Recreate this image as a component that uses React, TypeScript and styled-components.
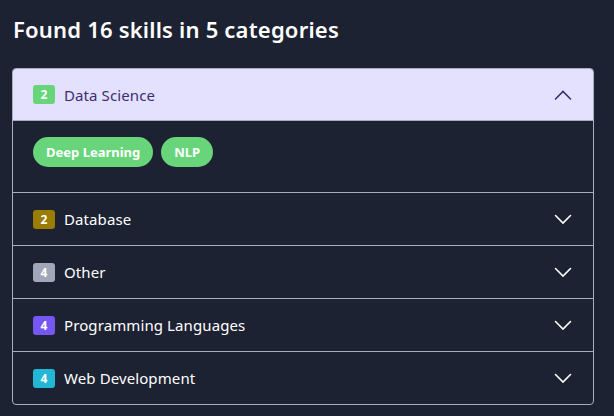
import React, { useState } from "react";
import styled, { createGlobalStyle } from "styled-components";

const Global = createGlobalStyle`
  html, body { margin: 0; padding: 0; background: #1d2232; }
  body { font-family: "Noto Sans", "Open Sans", sans-serif; -webkit-font-smoothing: antialiased; }
  * { box-sizing: border-box; }
`;

const Page = styled.div`
  width: 614px;
  height: 416px;
  background: #1d2232;
  padding: 14px 12px 0 12px;
  overflow: hidden;
`;

const Title = styled.h1`
  margin: 0 0 24px 1px;
  font-size: 22px;
  line-height: 30px;
  font-weight: 600;
  color: #ffffff;
  letter-spacing: 0.2px;
`;

const Accordion = styled.div`
  width: 582px;
  border: 1px solid #a7aec0;
  border-radius: 4px;
  overflow: hidden;
`;

const Item = styled.div`
  & + & { border-top: 1px solid #a7aec0; }
`;

const Header = styled.button<{ $open: boolean }>`
  all: unset;
  box-sizing: border-box;
  width: 100%;
  height: 52px;
  display: flex;
  align-items: center;
  padding: 0 21px 0 20px;
  cursor: pointer;
  background: ${(p) => (p.$open ? "#e4e0ff" : "transparent")};
  color: ${(p) => (p.$open ? "#3a2f6e" : "#ffffff")};
  border-bottom: ${(p) => (p.$open ? "1px solid #a7aec0" : "none")};
`;

const Badge = styled.span<{ $bg: string }>`
  width: 22px;
  height: 19px;
  border-radius: 3px;
  background: ${(p) => p.$bg};
  color: #ffffff;
  font-size: 12px;
  font-weight: 700;
  display: flex;
  align-items: center;
  justify-content: center;
  margin-right: 9px;
  flex: none;
`;

const Label = styled.span`
  flex: 1;
  font-size: 15px;
  font-weight: 400;
  letter-spacing: 0.1px;
`;

const Chevron = styled.svg`
  flex: none;
  display: block;
`;

const Panel = styled.div`
  display: flex;
  gap: 8px;
  padding: 16px 20px 25px 20px;
`;

const Chip = styled.span`
  height: 30px;
  border-radius: 15px;
  background: #68d57b;
  color: #ffffff;
  font-size: 13px;
  font-weight: 700;
  display: flex;
  align-items: center;
  padding: 0 13px;
`;

type Cat = { name: string; count: number; color: string; skills: string[] };

const cats: Cat[] = [
  { name: "Data Science", count: 2, color: "#68d57b", skills: ["Deep Learning", "NLP"] },
  { name: "Database", count: 2, color: "#9a7c00", skills: [] },
  { name: "Other", count: 4, color: "#a1a7b8", skills: [] },
  { name: "Programming Languages", count: 4, color: "#7657f4", skills: [] },
  { name: "Web Development", count: 4, color: "#22b8d5", skills: [] },
];

function Arrow({ up }: { up: boolean }) {
  return (
    <Chevron width="18" height="18" viewBox="0 0 18 18" fill="none">
      <path
        d={up ? "M1.5 13 L9 5.5 L16.5 13" : "M1.5 5.5 L9 13 L16.5 5.5"}
        stroke="currentColor"
        strokeWidth="1.6"
        strokeLinecap="round"
        strokeLinejoin="miter"
      />
    </Chevron>
  );
}

export default function App() {
  const [open, setOpen] = useState<number>(0);
  return (
    <Page>
      <Global />
      <Title>Found 16 skills in 5 categories</Title>
      <Accordion>
        {cats.map((c, i) => (
          <Item key={c.name}>
            <Header $open={open === i} onClick={() => setOpen(open === i ? -1 : i)}>
              <Badge $bg={c.color}>{c.count}</Badge>
              <Label>{c.name}</Label>
              <Arrow up={open === i} />
            </Header>
            {open === i && (
              <Panel>
                {c.skills.map((s) => (
                  <Chip key={s}>{s}</Chip>
                ))}
              </Panel>
            )}
          </Item>
        ))}
      </Accordion>
    </Page>
  );
}
